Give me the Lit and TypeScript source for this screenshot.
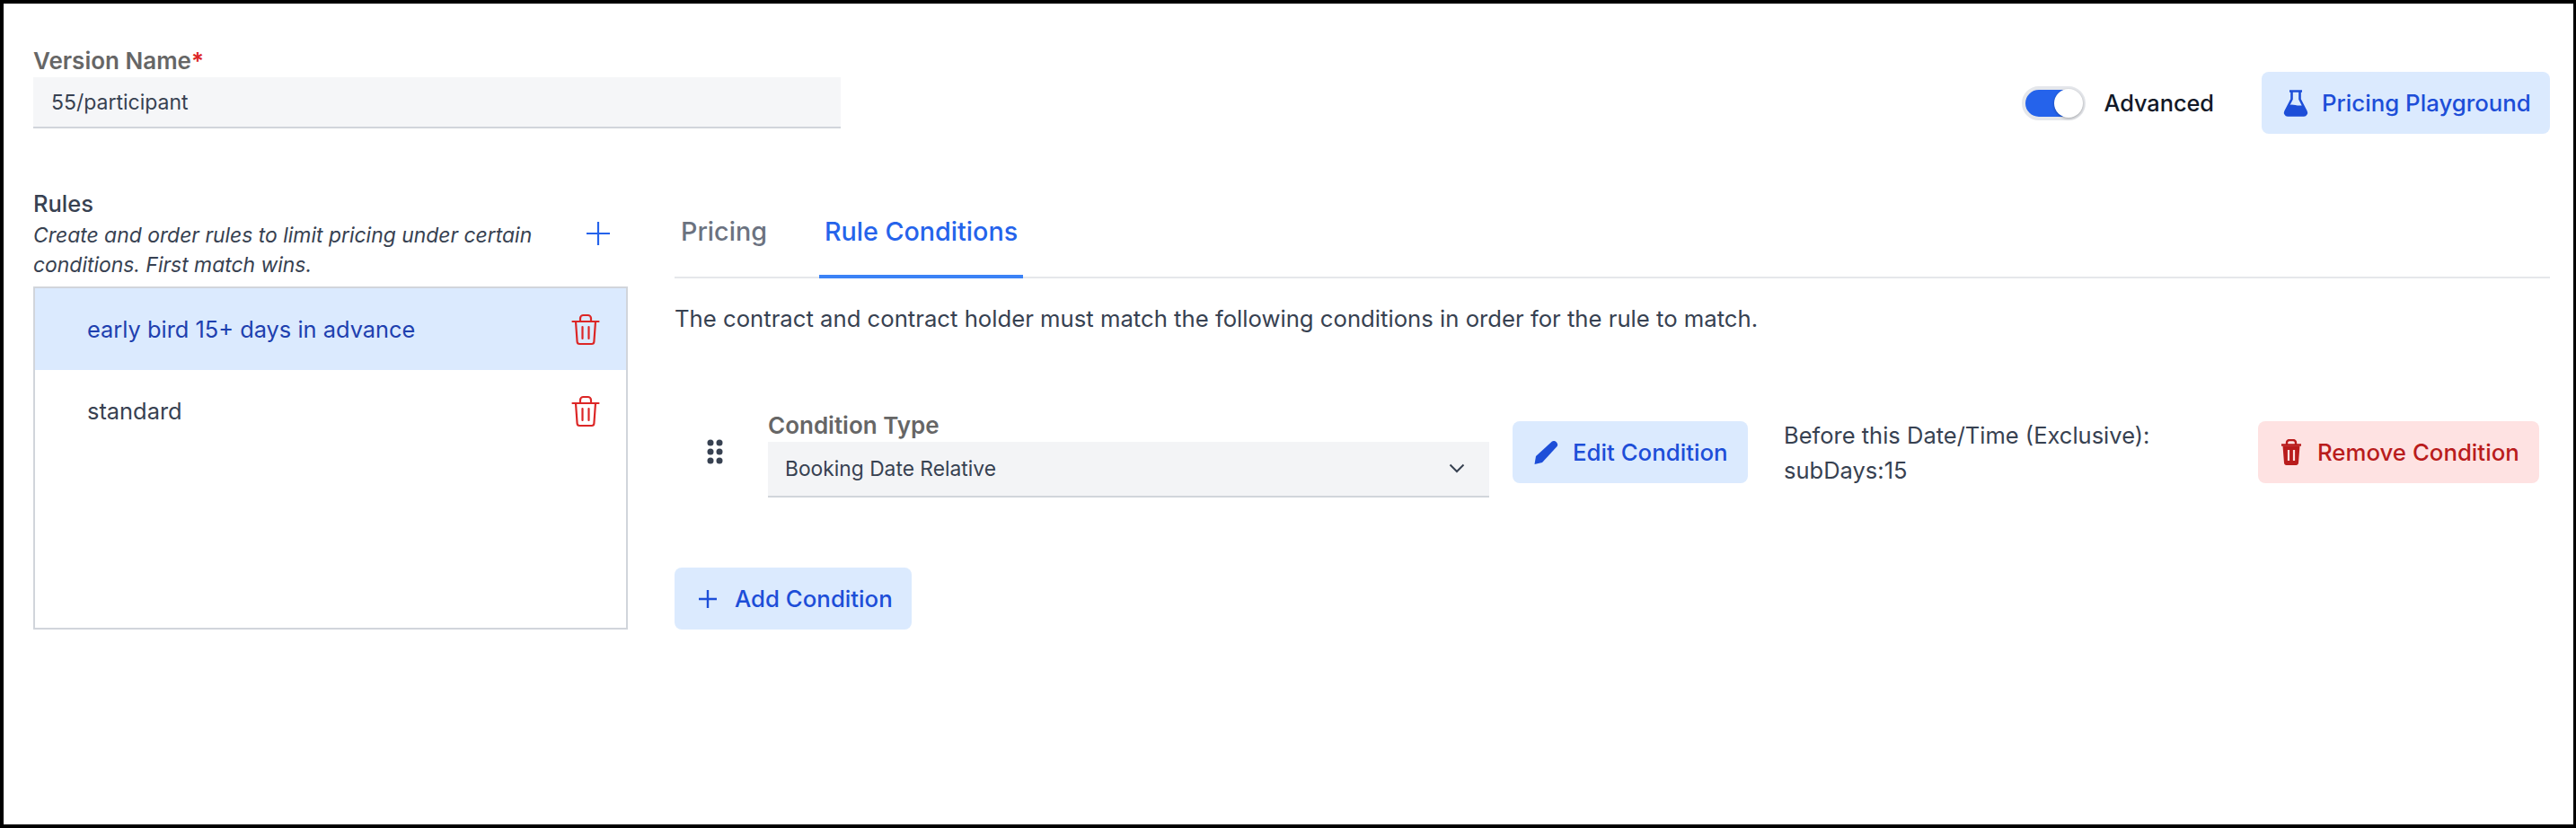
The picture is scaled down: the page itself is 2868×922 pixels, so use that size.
import { LitElement, html, css, svg } from "lit";
import { customElement } from "lit/decorators.js";

const trashOutline = svg`<path d="M3.500 9h29M7 9l1.600 22.500c.1 1.400 1.200 2.500 2.600 2.500h13.600c1.400 0 2.500-1.100 2.600-2.500L29 9M12 9V5.500C12 3.600 13.600 2 15.500 2h5C22.400 2 24 3.600 24 5.500V9M14.500 15v13M21.500 15v13" fill="none" stroke="currentColor" stroke-width="2.200" stroke-linecap="round" stroke-linejoin="round"/>`;

@customElement("app-root")
export class AppRoot extends LitElement {
  static styles = css`
    :host {
      display: block;
      box-sizing: border-box;
      height: 922px;
      border: 4px solid #000;
      border-right-width: 3px;
      background: #fff;
      font-family: Inter, "Liberation Sans", sans-serif;
      color: #374151;
      padding: 0 26px 0 33px;
      overflow: hidden;
    }
    .top { display: flex; justify-content: space-between; align-items: flex-start; padding-top: 46px; }
    .field-label { font-size: 26px; font-weight: 600; line-height: 36px; color: #666; height: 36px; }
    .req { color: #dc2626; }
    .version { width: 899px; }
    .input {
      box-sizing: border-box; height: 57px; background: #f5f6f8; border-bottom: 2px solid #d1d5db;
      padding: 0 20px; display: flex; align-items: center; font-size: 23px; color: #374151;
    }
    .actions { display: flex; align-items: center; padding-top: 30px; }
    .toggle {
      box-sizing: border-box; width: 71px; height: 38px; border-radius: 19px; background: #2563eb;
      border: 4px solid #e5e7eb; display: flex; justify-content: flex-end; align-items: center; margin-right: 20px;
    }
    .thumb { flex: none; width: 32px; height: 32px; background: #fff; border-radius: 50%; box-shadow: 0 1px 3px rgba(0,0,0,.3); margin-right: -1px; }
    .adv { font-size: 25.300px; font-weight: 500; color: #111827; margin-right: 53px; }
    .btn {
      box-sizing: border-box; height: 69px; border-radius: 8px; display: inline-flex; align-items: center;
      font-size: 25.800px; font-weight: 500; background: #dbeafe; color: #1d4ed8; white-space: nowrap;
    }
    .btn.red { background: #fee2e2; color: #b91c1c; }
    .btn svg { display: block; flex: none; }
    .main { display: flex; gap: 52px; padding-top: 62px; }
    .left { width: 662px; flex: none; }
    .rules-title { font-size: 25.500px; font-weight: 500; line-height: 33px; color: #374151; margin: -1px 0 3px; }
    .rules-head { display: flex; justify-content: space-between; align-items: flex-start; }
    .desc { font-size: 22.900px; font-style: italic; line-height: 33px; width: 590px; color: #374151; }
    .plus { color: #2563eb; margin: 0 19px 0 0; display: block; }
    .list { box-sizing: border-box; height: 382px; border: 2px solid #d1d5db; margin-top: 7px; }
    .row { height: 91px; padding: 0 27px 0 58px; display: flex; align-items: center; justify-content: space-between; font-size: 25.400px; color: #374151; }
    .row.sel { background: #dbeafe; color: #1e40af; }
    .row svg { color: #dc2626; display: block; }
    .right { flex: 1; min-width: 0; }
    .tabs { display: flex; border-bottom: 2px solid #e5e7eb; height: 99px; box-sizing: border-box; gap: 52px; padding-left: 1px; }
    .tab { font-size: 28.700px; font-weight: 500; line-height: 40px; padding: 27px 6px 0; color: #6b7280; height: 99px; box-sizing: border-box; }
    .tab.active { color: #2563eb; border-bottom: 4px solid #3b82f6; }
    .para { font-size: 25.700px; line-height: 36px; margin-top: 27px; color: #374151; }
    .cond { display: flex; align-items: flex-start; margin-top: 96px; height: 92px; }
    .handle { color: #374151; margin: 20px 50px 0 36px; display: block; flex: none; }
    .ctype { width: 803px; flex: none; margin-top: -13px; }
    .select {
      box-sizing: border-box; height: 62px; background: #f3f4f6; border-bottom: 2px solid #d1d5db; padding: 0 27px 2px 19px;
      display: flex; align-items: center; justify-content: space-between; font-size: 22.800px; color: #374151;
    }
    .select svg { display: block; color: #374151; }
    .edit { margin-left: 26px; padding: 0 22px 0 23px; gap: 16px; width: 262px; }
    .before { font-size: 25.500px; line-height: 39px; margin-left: 40px; width: 400px; flex: none; margin-top: -4px; white-space: nowrap; }
    .remove { margin-left: auto; width: 313px; margin-right: 12px; padding: 0 0 0 25px; gap: 17px; }
    .add { margin-top: 71px; width: 264px; padding: 0 0 0 27px; gap: 20px; }
    .pg { width: 321px; padding-left: 24px; gap: 15px; }
  `;

  render() {
    return html`
      <div class="top">
        <div class="version">
          <div class="field-label">Version Name<span class="req">*</span></div>
          <div class="input">55/participant</div>
        </div>
        <div class="actions">
          <div class="toggle"><div class="thumb"></div></div>
          <span class="adv">Advanced</span>
          <div class="btn pg">
            <svg width="28" height="30" viewBox="0 0 28 30"><path d="M7 1.500h14M9.500 1.500v9L2.500 24c-1 2 .3 4.500 2.500 4.500h18c2.200 0 3.500-2.500 2.500-4.500l-7-13.500v-9" fill="none" stroke="currentColor" stroke-width="2.600" stroke-linejoin="round"/><path d="M6 17c5-2 10 2 16 0l3.300 7c1 2-.3 4.500-2.500 4.500H5C2.800 28.500 1.500 26 2.500 24z" fill="currentColor"/></svg>
            Pricing Playground
          </div>
        </div>
      </div>
      <div class="main">
        <div class="left">
          <div class="rules-title">Rules</div>
          <div class="rules-head">
            <div class="desc">Create and order rules to limit pricing under certain conditions. First match wins.</div>
            <svg class="plus" width="28" height="28" viewBox="0 0 28 28"><path d="M14 1v26M1 14h26" stroke="currentColor" stroke-width="2.200" fill="none"/></svg>
          </div>
          <div class="list">
            <div class="row sel"><span>early bird 15+ days in advance</span><svg width="36" height="36" viewBox="0 0 36 36">${trashOutline}</svg></div>
            <div class="row"><span>standard</span><svg width="36" height="36" viewBox="0 0 36 36">${trashOutline}</svg></div>
          </div>
        </div>
        <div class="right">
          <div class="tabs">
            <div class="tab">Pricing</div>
            <div class="tab active">Rule Conditions</div>
          </div>
          <div class="para">The contract and contract holder must match the following conditions in order for the rule to match.</div>
          <div class="cond">
            <svg class="handle" width="18" height="28" viewBox="0 0 18 28" fill="currentColor"><circle cx="4" cy="4" r="3.500"/><circle cx="14" cy="4" r="3.500"/><circle cx="4" cy="14" r="3.500"/><circle cx="14" cy="14" r="3.500"/><circle cx="4" cy="24" r="3.500"/><circle cx="14" cy="24" r="3.500"/></svg>
            <div class="ctype">
              <div class="field-label">Condition Type</div>
              <div class="select">Booking Date Relative
                <svg width="18" height="11" viewBox="0 0 18 11"><path d="M1.500 1.500 9 9l7.500-7.500" fill="none" stroke="currentColor" stroke-width="2"/></svg>
              </div>
            </div>
            <div class="btn edit">
              <svg width="28" height="28" viewBox="0 0 28 28"><path d="M21 1.500c1.500-1 3.500-.5 4.800.8s1.800 3.300.8 4.800L10 25 1.500 27 3 18z" fill="currentColor"/></svg>
              Edit Condition
            </div>
            <div class="before">Before this Date/Time (Exclusive):<br />subDays:15</div>
            <div class="btn red remove">
              <svg width="24" height="30" viewBox="0 0 24 30"><path d="M1 6.500h22M7 6V4c0-1.600 1.300-3 3-3h4c1.700 0 3 1.400 3 3v2" fill="none" stroke="currentColor" stroke-width="2.400"/><path d="M2.500 7.500h19L20 26.500c-.1 1.500-1.200 2.500-2.500 2.500h-11C5.200 29 4.100 28 4 26.500z" fill="currentColor"/><path d="M9 12v12M15 12v12" stroke="#fee2e2" stroke-width="2.200"/></svg>
              Remove Condition
            </div>
          </div>
          <div class="btn add">
            <svg width="20" height="20" viewBox="0 0 20 20"><path d="M10 0v20M0 10h20" stroke="currentColor" stroke-width="2.400" fill="none"/></svg>
            Add Condition
          </div>
        </div>
      </div>
    `;
  }
}
